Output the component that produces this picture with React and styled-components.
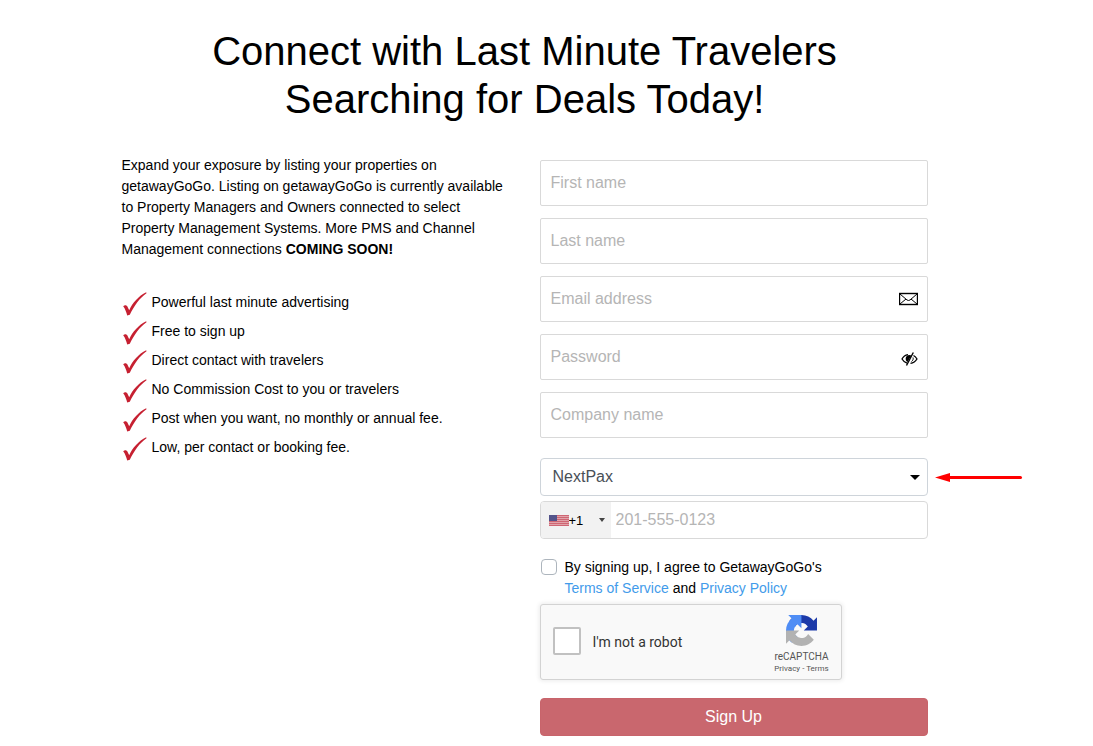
import React, { useState } from "react";
import styled, { createGlobalStyle } from "styled-components";

const GlobalStyle = createGlobalStyle`
  *, *::before, *::after { box-sizing: border-box; }
  body {
    margin: 0;
    background: #fff;
    color: #000;
    font-family: "Liberation Sans", Arial, Helvetica, sans-serif;
    font-size: 14px;
    line-height: 21px;
  }
`;

const Page = styled.main`
  padding: 27px 44px 10px 0;
`;

const Container = styled.div`
  max-width: 806px;
  margin: 0 auto;
`;

const Title = styled.h1`
  margin: 0 0 32px;
  font-size: 40px;
  line-height: 48px;
  font-weight: 400;
  text-align: center;
`;

const Columns = styled.div`
  display: grid;
  grid-template-columns: 1fr 1fr;
  column-gap: 30px;
`;

const Intro = styled.p`
  margin: 0 0 32px;
`;

const Benefits = styled.ul`
  margin: 0;
  padding: 0;
  list-style: none;
`;

const Benefit = styled.li`
  display: flex;
  gap: 5px;
  height: 29px;
  line-height: 21px;

  svg {
    flex: none;
    width: 25px;
    height: 25px;
  }
`;

const Form = styled.form`
  display: flex;
  flex-direction: column;
  padding-top: 5px;
`;

const Fields = styled.div`
  display: flex;
  flex-direction: column;
  gap: 12px;
  margin-bottom: 20px;
`;

const Field = styled.div`
  display: flex;
  align-items: center;
  height: 46px;
  padding: 0 9px 0 10px;
  border: 1px solid #d9d9d9;
  border-radius: 2px;
`;

const TextInput = styled.input`
  flex: 1;
  min-width: 0;
  height: 100%;
  padding: 0;
  border: 0;
  outline: 0;
  background: none;
  color: #495057;
  font: inherit;
  font-size: 16px;

  &::placeholder {
    color: #b5b5b5;
    opacity: 1;
  }
`;

const IconButton = styled.button`
  display: flex;
  padding: 4px 0 0;
  border: 0;
  background: none;
  color: #000;
  cursor: pointer;
`;

const SelectRow = styled.div`
  position: relative;
  margin-bottom: 5px;
`;

const Select = styled.select`
  display: block;
  width: 100%;
  height: 38px;
  padding: 0 36px 2px 12px;
  border: 1px solid #ced4da;
  border-radius: 4px;
  appearance: none;
  background: #fff;
  color: #495057;
  font: inherit;
  font-size: 16px;
`;

const SelectCaret = styled.svg`
  position: absolute;
  top: 17px;
  right: 8px;
  pointer-events: none;
`;

const Arrow = styled.svg`
  position: absolute;
  top: 14px;
  left: calc(100% + 6px);
`;

const PhoneRow = styled.div`
  display: flex;
  height: 38px;
  margin-bottom: 18px;
  border: 1px solid #d9d9d9;
  border-radius: 4px;
  overflow: hidden;
`;

const Country = styled.div`
  display: flex;
  align-items: center;
  flex: none;
  width: 70px;
  margin-right: 5px;
  padding-left: 8px;
  background: #f2f2f2;

  svg { flex: none; }
`;

const CountrySelect = styled.select`
  flex: 1;
  min-width: 0;
  height: 100%;
  padding: 0;
  border: 0;
  appearance: none;
  background: none;
  color: #000;
  font: inherit;
  font-size: 13px;
`;

const CountryCaret = styled.svg`
  margin-right: 6px;
  pointer-events: none;
`;

const Terms = styled.div`
  display: flex;
  gap: 8px;
  margin-bottom: 5px;
`;

const Checkbox = styled.input`
  appearance: none;
  flex: none;
  width: ${(p) => p.$size}px;
  height: ${(p) => p.$size}px;
  margin: 0;
  border: ${(p) => p.$border};
  border-radius: ${(p) => p.$radius}px;
  background: #fff;

  &:checked { background: #4a9fe8; }
`;

const TermsCheckbox = styled(Checkbox)`
  margin: 2px 0 0 1px;
`;

const Link = styled.a`
  color: #429bea;
  text-decoration: none;
`;

const Captcha = styled.div`
  display: flex;
  align-items: center;
  width: 302px;
  max-width: 100%;
  height: 76px;
  margin-bottom: 18px;
  padding: 0 8px 2px 12px;
  border: 1px solid #d3d3d3;
  border-radius: 3px;
  background: #f9f9f9;
  box-shadow: 0 0 4px 1px rgba(0, 0, 0, 0.08);
  font-family: Roboto, "Liberation Sans", sans-serif;

  label {
    flex: 1;
    padding: 2px 0 0 12px;
    color: #333;
  }
`;

const CaptchaBrand = styled.div`
  display: flex;
  flex-direction: column;
  align-items: center;
  width: 62px;
  padding-top: 8px;
  color: #555;
  font-size: 10px;
  line-height: 12px;

  svg { margin-bottom: 5px; }
`;

const CaptchaLinks = styled.div`
  font-size: 8px;
  white-space: nowrap;

  a {
    color: #555;
    text-decoration: none;
  }
`;

const Submit = styled.button`
  height: 38px;
  padding: 0 0 1px;
  border: 1px solid #c8646b;
  border-radius: 4px;
  background: #c9676e;
  color: #fff;
  font: inherit;
  font-size: 16px;
  cursor: pointer;
`;

const benefits = [
  "Powerful last minute advertising",
  "Free to sign up",
  "Direct contact with travelers",
  "No Commission Cost to you or travelers",
  "Post when you want, no monthly or annual fee.",
  "Low, per contact or booking fee.",
];

const CheckIcon = () => (
  <svg viewBox="0 0 25 25" aria-hidden="true">
    <path
      d="M1.200 14.200C2.800 12.800 4.800 13.200 5.500 14.800L7.200 18.200C10.500 11 16.500 4 24.200.3L24.500 1.200C17.500 6 12 14 7.800 22.800L5.200 23.500C4.400 20.200 3.200 16.800 1.200 14.200Z"
      fill="#c62031"
    />
  </svg>
);

const MailIcon = () => (
  <svg width="19" height="14" viewBox="0 0 19 14" fill="none" stroke="#000" aria-hidden="true">
    <rect x="0.5" y="1.5" width="18" height="11" strokeWidth="1.4" />
    <path d="M1 2l7 6q1.500 1 3 0l7-6M1 12l6-5M18 12l-6-5" strokeWidth="1" />
  </svg>
);

const EyeOffIcon = () => (
  <svg width="17" height="14" viewBox="0 0 17 14" fill="none" stroke="#000" aria-hidden="true">
    <path d="M7 2.600C4.300 3 2.200 4.700 1 7c1.200 2 3 3.600 5 4.200" strokeWidth="1.300" />
    <path d="M12.500 3.500c1.500.8 2.600 2 3.500 3.500-1.500 2.500-3.700 4-6.500 4.400" strokeWidth="1.300" />
    <path d="M10.500 3.500L6.500 10C4.300 8.800 4 5.500 6 3.800 7.200 2.800 9 2.700 10.500 3.500z" fill="#000" stroke="none" />
    <path d="M12.300.5L5.500 13.500" strokeWidth="1.400" />
    <path d="M12 5.500c.5 1.600 0 3-1.500 4" />
  </svg>
);

const FlagIcon = () => (
  <svg width="20" height="11" viewBox="0 0 20 11" shapeRendering="crispEdges" aria-hidden="true">
    <rect width="20" height="11" fill="#e0a3aa" />
    <path d="M0 .5h20M0 2.500h20M0 4.500h20M0 6.500h20M0 8.500h20M0 10.500h20" stroke="#cf6673" />
    <rect width="8" height="6" fill="#54548b" />
  </svg>
);

const RecaptchaIcon = () => (
  <svg width="31" height="31" viewBox="0 0 64 64" aria-hidden="true">
    <path
      fill="#1c3aa9"
      d="M64 31.955l-.033-1.370V4.687l-7.160 7.160C50.948 4.674 42.033.093 32.050.093c-10.390 0-19.622 4.960-25.460 12.640l11.736 11.860a15.550 15.550 0 0 1 4.754-5.334c2.050-1.600 4.952-2.906 8.968-2.906.485 0 .860.057 1.135.163 4.976.393 9.288 3.140 11.828 7.124l-8.307 8.307L64 31.953"
    />
    <path
      fill="#4f8df5"
      d="M31.862.094l-1.370.033H4.594l7.160 7.160C4.580 13.147 0 22.060 0 32.046c0 10.390 4.960 19.622 12.640 25.460L24.500 45.770a15.550 15.550 0 0 1-5.334-4.754c-1.600-2.050-2.906-4.952-2.906-8.968 0-.485.057-.860.163-1.135.393-4.976 3.140-9.288 7.124-11.828l8.307 8.307L31.860.095"
    />
    <path
      fill="#b2b2b2"
      d="M.001 32.045l.033 1.370v25.898l7.160-7.160c5.860 7.173 14.774 11.754 24.760 11.754 10.390 0 19.622-4.960 25.460-12.640l-11.736-11.860a15.550 15.550 0 0 1-4.754 5.334c-2.050 1.600-4.952 2.906-8.968 2.906-.485 0-.860-.057-1.135-.163-4.976-.393-9.288-3.140-11.828-7.124l8.307-8.307c-10.522.040-22.400.066-27.295-.005"
    />
  </svg>
);

export default function App() {
  const [showPassword, setShowPassword] = useState(false);

  return (
    <>
      <GlobalStyle />
      <Page>
        <Container>
          <Title>
            Connect with Last Minute Travelers
            <br />
            Searching for Deals Today!
          </Title>
          <Columns>
            <section>
              <Intro>
                Expand your exposure by listing your properties on getawayGoGo. Listing on
                getawayGoGo is currently available to Property Managers and Owners connected to
                select Property Management Systems. More PMS and Channel Management connections{" "}
                <strong>COMING SOON!</strong>
              </Intro>
              <Benefits>
                {benefits.map((text) => (
                  <Benefit key={text}>
                    <CheckIcon />
                    <span>{text}</span>
                  </Benefit>
                ))}
              </Benefits>
            </section>
            <Form onSubmit={(e) => e.preventDefault()}>
              <Fields>
                <Field>
                  <TextInput aria-label="First name" placeholder="First name" />
                </Field>
                <Field>
                  <TextInput aria-label="Last name" placeholder="Last name" />
                </Field>
                <Field>
                  <TextInput type="email" aria-label="Email address" placeholder="Email address" />
                  <MailIcon />
                </Field>
                <Field>
                  <TextInput
                    type={showPassword ? "text" : "password"}
                    aria-label="Password"
                    placeholder="Password"
                  />
                  <IconButton
                    type="button"
                    aria-label="Show password"
                    onClick={() => setShowPassword(!showPassword)}
                  >
                    <EyeOffIcon />
                  </IconButton>
                </Field>
                <Field>
                  <TextInput aria-label="Company name" placeholder="Company name" />
                </Field>
              </Fields>
              <SelectRow>
                <Select aria-label="Property management system" defaultValue="NextPax">
                  <option>NextPax</option>
                </Select>
                <SelectCaret width="10" height="5" viewBox="0 0 10 5" aria-hidden="true">
                  <path d="M0 0h10L5 5z" />
                </SelectCaret>
                <Arrow width="90" height="11" viewBox="0 0 90 11" aria-hidden="true">
                  <path d="M1 5.500L16 1v9z" fill="#f00" />
                  <path d="M14 5.500h72.500" stroke="#f00" strokeWidth="3" strokeLinecap="round" />
                </Arrow>
              </SelectRow>
              <PhoneRow>
                <Country>
                  <FlagIcon />
                  <CountrySelect aria-label="Country code" defaultValue="+1">
                    <option>+1</option>
                  </CountrySelect>
                  <CountryCaret width="6" height="4" viewBox="0 0 6 4" aria-hidden="true">
                    <path d="M0 0h6L3 4z" fill="#444" />
                  </CountryCaret>
                </Country>
                <TextInput type="tel" aria-label="Phone number" placeholder="201-555-0123" />
              </PhoneRow>
              <Terms>
                <TermsCheckbox
                  id="terms"
                  type="checkbox"
                  $size={16}
                  $border="1px solid #adb5bd"
                  $radius={4}
                />
                <label htmlFor="terms">
                  By signing up, I agree to GetawayGoGo's
                  <br />
                  <Link href="#terms-of-service">Terms of Service</Link> and{" "}
                  <Link href="#privacy-policy">Privacy Policy</Link>
                </label>
              </Terms>
              <Captcha>
                <Checkbox
                  id="robot"
                  type="checkbox"
                  $size={28}
                  $border="2px solid #c1c1c1"
                  $radius={2}
                />
                <label htmlFor="robot">I'm not a robot</label>
                <CaptchaBrand>
                  <RecaptchaIcon />
                  reCAPTCHA
                  <CaptchaLinks>
                    <a href="#privacy">Privacy</a> - <a href="#terms-link">Terms</a>
                  </CaptchaLinks>
                </CaptchaBrand>
              </Captcha>
              <Submit type="submit">Sign Up</Submit>
            </Form>
          </Columns>
        </Container>
      </Page>
    </>
  );
}
